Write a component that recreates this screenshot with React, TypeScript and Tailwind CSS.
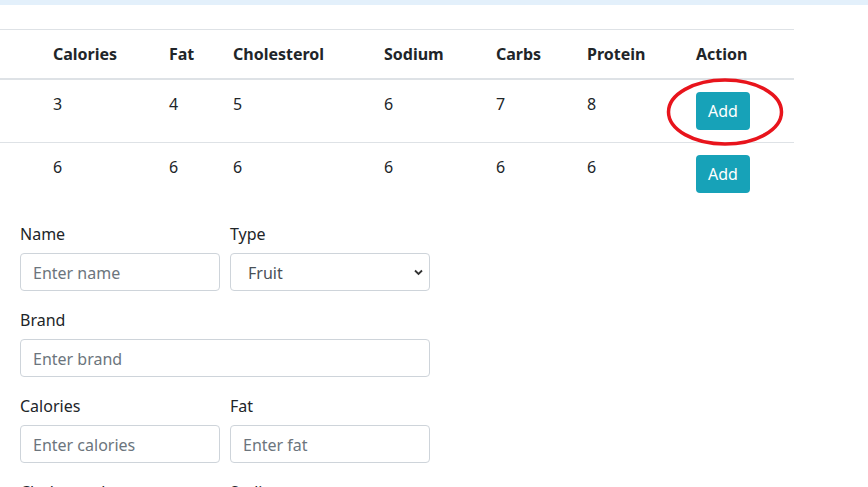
const headers = ['Calories', 'Fat', 'Cholesterol', 'Sodium', 'Carbs', 'Protein', 'Action'];

const rows = [
  ['3', '4', '5', '6', '7', '8'],
  ['6', '6', '6', '6', '6', '6'],
];

const inputClass =
  'block h-[38px] w-full rounded-[4px] border border-[#ced4da] bg-white px-3 pt-px text-base text-[#495057] placeholder:text-[#6c757d] focus:outline-none';

const labelClass = 'mb-[7px] block pt-px leading-6';

const Field = ({ label, placeholder, wide }: { label: string; placeholder: string; wide?: boolean }) => (
  <div className={wide ? 'col-span-2 mb-4' : 'mb-4'}>
    <label className={labelClass}>{label}</label>
    <input className={inputClass} placeholder={placeholder} />
  </div>
);

export default function App() {
  return (
    <div className="min-h-screen bg-white text-base leading-6 text-[#212529] [font-family:'Segoe_UI','Noto_Sans',sans-serif]">
      <div className="h-[5px] bg-[#e3f0fb]" />

      <div className="relative mt-6 w-[794px]">
        <table className="mb-4 w-[794px] table-fixed border-collapse">
          <colgroup>
            <col className="w-[41px]" />
            <col className="w-[116px]" />
            <col className="w-[64px]" />
            <col className="w-[151px]" />
            <col className="w-[112px]" />
            <col className="w-[91px]" />
            <col className="w-[109px]" />
            <col className="w-[110px]" />
          </colgroup>
          <thead>
            <tr>
              <th className="border-t border-b-2 border-[#dee2e6] p-3" />
              {headers.map((h) => (
                <th key={h} className="border-t border-b-2 border-[#dee2e6] p-3 text-left font-bold">
                  {h}
                </th>
              ))}
            </tr>
          </thead>
          <tbody>
            {rows.map((row, i) => (
              <tr key={i}>
                <td className={i === 0 ? 'p-3 align-top' : 'border-t border-[#dee2e6] p-3 align-top'} />
                {row.map((v, j) => (
                  <td
                    key={j}
                    className={i === 0 ? 'p-3 align-top' : 'border-t border-[#dee2e6] p-3 align-top'}
                  >
                    {v}
                  </td>
                ))}
                <td className={i === 0 ? 'p-3 align-top' : 'border-t border-[#dee2e6] p-3 align-top'}>
                  <button className="h-[38px] rounded-[4px] bg-[#17a2b8] px-3 text-base text-white">Add</button>
                </td>
              </tr>
            ))}
          </tbody>
        </table>

        {/* annotation drawn over the first Add button */}
        <svg className="pointer-events-none absolute left-[666px] top-[48px]" width="118" height="70" viewBox="0 0 118 70">
          <ellipse cx="59" cy="35" rx="56.5" ry="32" fill="none" stroke="#e8141c" strokeWidth="3.5" />
        </svg>
      </div>

      <form className="box-content grid w-[410px] grid-cols-2 gap-x-[10px] pl-5">
        <Field label="Name" placeholder="Enter name" />
        <div className="mb-4">
          <label className={labelClass}>Type</label>
          <div className="relative">
            <select className={`${inputClass} appearance-none pl-[17px]`} defaultValue="Fruit">
              <option>Fruit</option>
              <option>Vegetable</option>
            </select>
            <svg
              className="pointer-events-none absolute right-[7px] top-[16px]"
              width="9"
              height="7"
              viewBox="0 0 9 7"
            >
              <path d="M1 1.5l3.5 3.5L8 1.5" fill="none" stroke="#333" strokeWidth="1.8" />
            </svg>
          </div>
        </div>
        <Field label="Brand" placeholder="Enter brand" wide />
        <Field label="Calories" placeholder="Enter calories" />
        <Field label="Fat" placeholder="Enter fat" />
        <Field label="Cholesterol" placeholder="Enter cholesterol" />
        <Field label="Sodium" placeholder="Enter sodium" />
      </form>
    </div>
  );
}
